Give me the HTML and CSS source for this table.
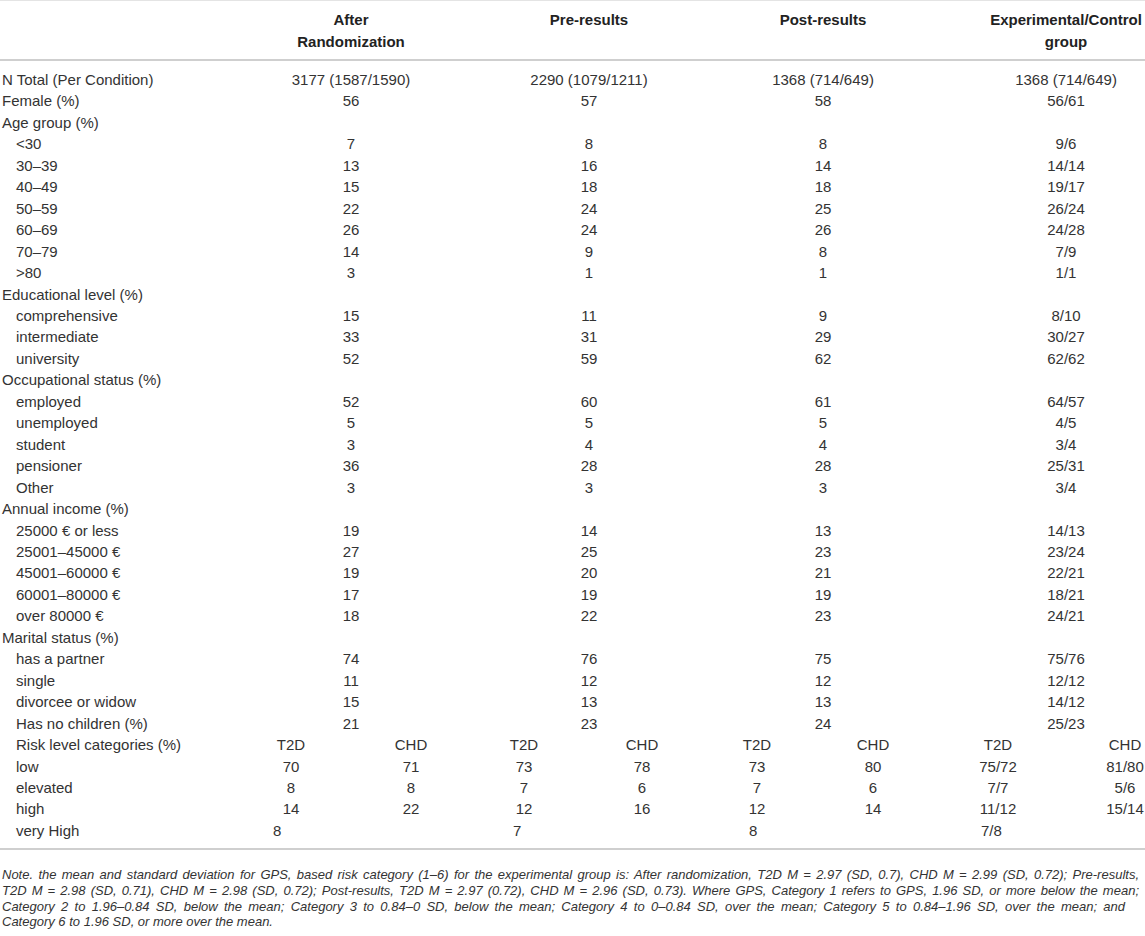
FILE: index.html
```html
<!DOCTYPE html>
<html lang="en">
<head>
<meta charset="utf-8">
<title>Participant characteristics</title>
<link rel="stylesheet" href="styles.css">
</head>
<body>
<div class="wrap">
  <table class="data">
    <colgroup>
      <col class="c-label">
      <col class="c1"><col class="c2"><col class="c3"><col class="c4">
      <col class="c5"><col class="c6"><col class="c7"><col class="c8">
    </colgroup>
    <thead>
      <tr>
        <th class="label"></th>
        <th colspan="2">After<br>Randomization</th>
        <th colspan="2">Pre-results</th>
        <th colspan="2">Post-results</th>
        <th colspan="2">Experimental/Control<br>group</th>
      </tr>
    </thead>
    <tbody>
      <tr><td class="label">N Total (Per Condition)</td><td colspan="2">3177 (1587/1590)</td><td colspan="2">2290 (1079/1211)</td><td colspan="2">1368 (714/649)</td><td colspan="2">1368 (714/649)</td></tr>
      <tr><td class="label">Female (%)</td><td colspan="2">56</td><td colspan="2">57</td><td colspan="2">58</td><td colspan="2">56/61</td></tr>
      <tr><td class="label">Age group (%)</td><td colspan="2"></td><td colspan="2"></td><td colspan="2"></td><td colspan="2"></td></tr>
      <tr><td class="label sub">&lt;30</td><td colspan="2">7</td><td colspan="2">8</td><td colspan="2">8</td><td colspan="2">9/6</td></tr>
      <tr><td class="label sub">30–39</td><td colspan="2">13</td><td colspan="2">16</td><td colspan="2">14</td><td colspan="2">14/14</td></tr>
      <tr><td class="label sub">40–49</td><td colspan="2">15</td><td colspan="2">18</td><td colspan="2">18</td><td colspan="2">19/17</td></tr>
      <tr><td class="label sub">50–59</td><td colspan="2">22</td><td colspan="2">24</td><td colspan="2">25</td><td colspan="2">26/24</td></tr>
      <tr><td class="label sub">60–69</td><td colspan="2">26</td><td colspan="2">24</td><td colspan="2">26</td><td colspan="2">24/28</td></tr>
      <tr><td class="label sub">70–79</td><td colspan="2">14</td><td colspan="2">9</td><td colspan="2">8</td><td colspan="2">7/9</td></tr>
      <tr><td class="label sub">&gt;80</td><td colspan="2">3</td><td colspan="2">1</td><td colspan="2">1</td><td colspan="2">1/1</td></tr>
      <tr><td class="label">Educational level (%)</td><td colspan="2"></td><td colspan="2"></td><td colspan="2"></td><td colspan="2"></td></tr>
      <tr><td class="label sub">comprehensive</td><td colspan="2">15</td><td colspan="2">11</td><td colspan="2">9</td><td colspan="2">8/10</td></tr>
      <tr><td class="label sub">intermediate</td><td colspan="2">33</td><td colspan="2">31</td><td colspan="2">29</td><td colspan="2">30/27</td></tr>
      <tr><td class="label sub">university</td><td colspan="2">52</td><td colspan="2">59</td><td colspan="2">62</td><td colspan="2">62/62</td></tr>
      <tr><td class="label">Occupational status (%)</td><td colspan="2"></td><td colspan="2"></td><td colspan="2"></td><td colspan="2"></td></tr>
      <tr><td class="label sub">employed</td><td colspan="2">52</td><td colspan="2">60</td><td colspan="2">61</td><td colspan="2">64/57</td></tr>
      <tr><td class="label sub">unemployed</td><td colspan="2">5</td><td colspan="2">5</td><td colspan="2">5</td><td colspan="2">4/5</td></tr>
      <tr><td class="label sub">student</td><td colspan="2">3</td><td colspan="2">4</td><td colspan="2">4</td><td colspan="2">3/4</td></tr>
      <tr><td class="label sub">pensioner</td><td colspan="2">36</td><td colspan="2">28</td><td colspan="2">28</td><td colspan="2">25/31</td></tr>
      <tr><td class="label sub">Other</td><td colspan="2">3</td><td colspan="2">3</td><td colspan="2">3</td><td colspan="2">3/4</td></tr>
      <tr><td class="label">Annual income (%)</td><td colspan="2"></td><td colspan="2"></td><td colspan="2"></td><td colspan="2"></td></tr>
      <tr><td class="label sub">25000 € or less</td><td colspan="2">19</td><td colspan="2">14</td><td colspan="2">13</td><td colspan="2">14/13</td></tr>
      <tr><td class="label sub">25001–45000 €</td><td colspan="2">27</td><td colspan="2">25</td><td colspan="2">23</td><td colspan="2">23/24</td></tr>
      <tr><td class="label sub">45001–60000 €</td><td colspan="2">19</td><td colspan="2">20</td><td colspan="2">21</td><td colspan="2">22/21</td></tr>
      <tr><td class="label sub">60001–80000 €</td><td colspan="2">17</td><td colspan="2">19</td><td colspan="2">19</td><td colspan="2">18/21</td></tr>
      <tr><td class="label sub">over 80000 €</td><td colspan="2">18</td><td colspan="2">22</td><td colspan="2">23</td><td colspan="2">24/21</td></tr>
      <tr><td class="label">Marital status (%)</td><td colspan="2"></td><td colspan="2"></td><td colspan="2"></td><td colspan="2"></td></tr>
      <tr><td class="label sub">has a partner</td><td colspan="2">74</td><td colspan="2">76</td><td colspan="2">75</td><td colspan="2">75/76</td></tr>
      <tr><td class="label sub">single</td><td colspan="2">11</td><td colspan="2">12</td><td colspan="2">12</td><td colspan="2">12/12</td></tr>
      <tr><td class="label sub">divorcee or widow</td><td colspan="2">15</td><td colspan="2">13</td><td colspan="2">13</td><td colspan="2">14/12</td></tr>
      <tr><td class="label sub">Has no children (%)</td><td colspan="2">21</td><td colspan="2">23</td><td colspan="2">24</td><td colspan="2">25/23</td></tr>
      <tr><td class="label sub">Risk level categories (%)</td><td>T2D</td><td>CHD</td><td>T2D</td><td>CHD</td><td>T2D</td><td>CHD</td><td>T2D</td><td>CHD</td></tr>
      <tr><td class="label sub">low</td><td>70</td><td>71</td><td>73</td><td>78</td><td>73</td><td>80</td><td>75/72</td><td>81/80</td></tr>
      <tr><td class="label sub">elevated</td><td>8</td><td>8</td><td>7</td><td>6</td><td>7</td><td>6</td><td>7/7</td><td>5/6</td></tr>
      <tr><td class="label sub">high</td><td>14</td><td>22</td><td>12</td><td>16</td><td>12</td><td>14</td><td>11/12</td><td>15/14</td></tr>
      <tr><td class="label sub">very High</td><td class="shift">8</td><td></td><td class="shift">7</td><td></td><td class="shift">8</td><td></td><td class="shift">7/8</td><td></td></tr>
    </tbody>
  </table>
  <div class="note">
    <p class="line">Note. the mean and standard deviation for GPS, based risk category (1–6) for the experimental group is: After randomization, T2D M = 2.97 (SD, 0.7), CHD M = 2.99 (SD, 0.72); Pre-results,</p>
    <p class="line">T2D M = 2.98 (SD, 0.71), CHD M = 2.98 (SD, 0.72); Post-results, T2D M = 2.97 (0.72), CHD M = 2.96 (SD, 0.73). Where GPS, Category 1 refers to GPS, 1.96 SD, or more below the mean;</p>
    <p class="line short">Category 2 to 1.96–0.84 SD, below the mean; Category 3 to 0.84–0 SD, below the mean; Category 4 to 0–0.84 SD, over the mean; Category 5 to 0.84–1.96 SD, over the mean; and</p>
    <p class="line last">Category 6 to 1.96 SD, or more over the mean.</p>
  </div>
</div>
</body>
</html>
```
FILE: styles.css
```css
html, body {
  margin: 0;
  padding: 0;
  background: #ffffff;
}

body {
  font-family: "Liberation Sans", Arial, Helvetica, sans-serif;
  color: #333333;
}

.wrap {
  width: 1145px;
  overflow: hidden;
}

.data {
  width: 1193px;
  border-collapse: collapse;
  table-layout: fixed;
  font-size: 15px;
}

.c-label { width: 231px; }
.c1 { width: 120px; }
.c2 { width: 120px; }
.c3 { width: 106px; }
.c4 { width: 130px; }
.c5 { width: 100px; }
.c6 { width: 132px; }
.c7 { width: 118px; }
.c8 { width: 136px; }

.data th {
  font-weight: bold;
  color: #222222;
  line-height: 22px;
  padding: 8px 0 6px;
  vertical-align: top;
  text-align: center;
  border-top: 1px solid #e4e4e4;
  border-bottom: 2px solid #cfcfcf;
}

.data td {
  padding: 0;
  line-height: 21.45px;
  text-align: center;
  white-space: nowrap;
  vertical-align: top;
}

.data td.label {
  text-align: left;
  padding-left: 2px;
}

.data td.sub {
  padding-left: 16px;
}

.data td.shift {
  text-align: left;
  padding-left: 42px;
}

.data tbody tr:first-child td {
  padding-top: 8px;
}

.data tbody tr:last-child td {
  padding-bottom: 7px;
  border-bottom: 2px solid #cfcfcf;
}

.note {
  width: 1137px;
  padding: 17px 6px 0 2px;
  font-size: 13px;
  font-style: italic;
  line-height: 15.6px;
  color: #333333;
}

.note .line {
  margin: 0;
  white-space: nowrap;
  text-align: justify;
  text-align-last: justify;
}

.note .line.short {
  margin-right: 14px;
}

.note .line.last {
  text-align: left;
  text-align-last: left;
}
```
